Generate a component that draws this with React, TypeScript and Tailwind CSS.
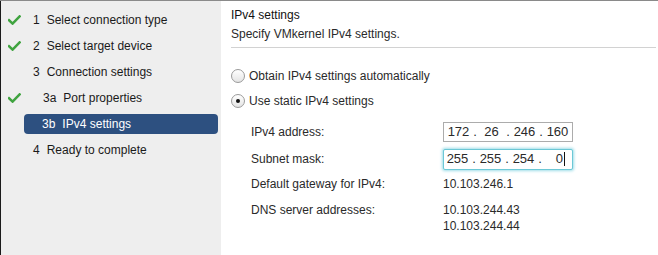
import React from "react";

function Check() {
  return (
    <svg width="13" height="10" viewBox="0 0 13 10" className="block">
      <path d="M1 5.2 L4.6 8.6 L11.6 1.4" fill="none" stroke="#3fa33f" strokeWidth="2.5" strokeLinecap="square" />
    </svg>
  );
}

type Step = { num: string; label: string; done?: boolean; sub?: boolean; active?: boolean };

const steps: Step[] = [
  { num: "1", label: "Select connection type", done: true },
  { num: "2", label: "Select target device", done: true },
  { num: "3", label: "Connection settings" },
  { num: "3a", label: "Port properties", done: true, sub: true },
  { num: "3b", label: "IPv4 settings", sub: true, active: true },
  { num: "4", label: "Ready to complete" },
];

function Radio({ checked }: { checked?: boolean }) {
  return (
    <div className="w-[14px] h-[14px] rounded-full border border-[#9a9a9a] bg-gradient-to-b from-[#ffffff] to-[#e4e4e4] flex items-center justify-center">
      {checked && <div className="w-[4px] h-[4px] rounded-full bg-[#111]" />}
    </div>
  );
}

function Seg({ children }: { children: React.ReactNode }) {
  return <div className="w-[27px] flex justify-center">{children}</div>;
}
function Dot() {
  return <div className="w-[6px] flex justify-center">.</div>;
}

export default function App() {
  return (
    <div className="w-[658px] h-[255px] flex flex-col bg-white font-['Liberation_Sans',Arial,sans-serif] text-[12px] text-[#2a2a2a] overflow-hidden">
      <div className="h-[1px] bg-[#8a8a8a] shrink-0" />
      <div className="flex flex-1 border-l border-[#1a1a1a]">
        {/* Sidebar */}
        <div className="w-[220px] bg-[#eeeeee] pt-[9px] flex flex-col gap-[6px] text-[#1a1a1a]">
          {steps.map((s) =>
            s.active ? (
              <div
                key={s.num}
                className="ml-[23px] w-[194px] h-[20px] rounded-[4px] bg-[#2d5080] text-white flex items-center pl-[18px] leading-[16px]"
              >
                <span className="mr-[7px]">{s.num}</span>
                <span>{s.label}</span>
              </div>
            ) : (
              <div key={s.num} className="h-[20px] flex items-center pl-[7px] leading-[16px]">
                <div className="w-[25px] flex items-center">{s.done && <Check />}</div>
                {s.sub && <div className="w-[10px]" />}
                <span className="mr-[7px]">{s.num}</span>
                <span>{s.label}</span>
              </div>
            )
          )}
        </div>

        {/* Main */}
        <div className="flex-1 pl-[10px] pt-[6px] flex flex-col">
          <div className="leading-[16px] text-[#111]">IPv4 settings</div>
          <div className="leading-[16px] mt-[3px]">Specify VMkernel IPv4 settings.</div>
          <div className="h-[1px] bg-[#d2d2d2] mt-[5px] mr-[2px]" />

          <div className="mt-[18px] h-[20px] flex items-center gap-[4px]">
            <Radio />
            <span className="leading-[16px]">Obtain IPv4 settings automatically</span>
          </div>
          <div className="mt-[5px] h-[20px] flex items-center gap-[4px]">
            <Radio checked />
            <span className="leading-[16px]">Use static IPv4 settings</span>
          </div>

          <div className="pl-[20px] mt-[11px] flex flex-col">
            <div className="flex items-center h-[20px]">
              <div className="w-[192px] leading-[16px]">IPv4 address:</div>
              <div className="w-[130px] h-[20px] border border-[#acacac] bg-white flex items-center pl-[1px] leading-[16px] text-[13px]">
                <Seg>172</Seg>
                <Dot />
                <Seg>26</Seg>
                <Dot />
                <Seg>246</Seg>
                <Dot />
                <Seg>160</Seg>
              </div>
            </div>
            <div className="flex items-center h-[20px] mt-[7px]">
              <div className="w-[192px] leading-[16px]">Subnet mask:</div>
              <div className="w-[130px] h-[21px] border-[1.5px] border-[#6cc8d6] rounded-[2px] shadow-[0_0_3px_1px_#9edde8] bg-white flex items-center leading-[16px] text-[13px]">
                <Seg>255</Seg>
                <Dot />
                <Seg>255</Seg>
                <Dot />
                <Seg>254</Seg>
                <Dot />
                <div className="w-[27px] flex justify-end items-center pr-[5px]">
                  <span>0</span>
                  <span className="w-[1px] h-[14px] bg-[#111] ml-[1px]" />
                </div>
              </div>
            </div>
            <div className="flex h-[16px] mt-[7px] leading-[16px]">
              <div className="w-[192px]">Default gateway for IPv4:</div>
              <div>10.103.246.1</div>
            </div>
            <div className="flex mt-[10px] leading-[16px]">
              <div className="w-[192px]">DNS server addresses:</div>
              <div className="flex flex-col">
                <div>10.103.244.43</div>
                <div>10.103.244.44</div>
              </div>
            </div>
          </div>
        </div>
      </div>
    </div>
  );
}
